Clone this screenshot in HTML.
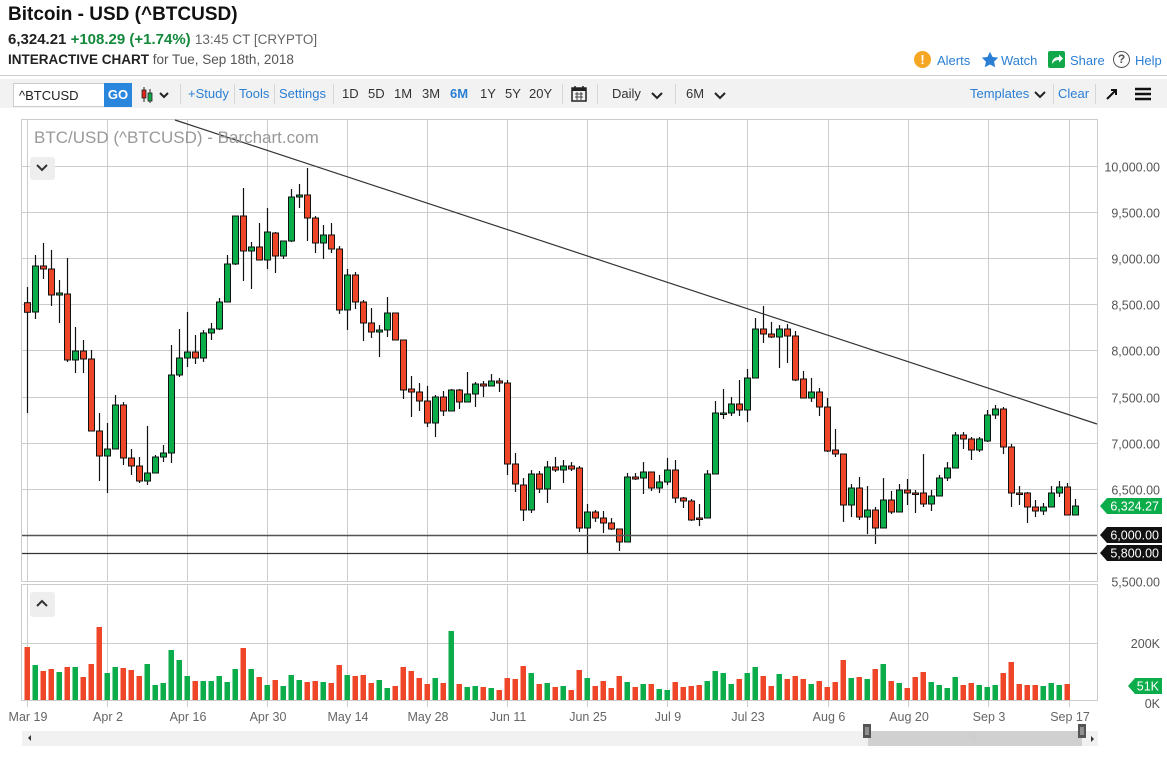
<!DOCTYPE html>
<html><head><meta charset="utf-8"><style>
*{margin:0;padding:0;box-sizing:border-box}
body{width:1167px;height:757px;background:#fff;font-family:"Liberation Sans",sans-serif;position:relative;overflow:hidden;color:#222}
.a{position:absolute;white-space:nowrap}
.tb{position:absolute;top:79px;left:0;width:1167px;height:29px;background:#f2f2f2}
.bl{color:#2a7fd4}
.sep{position:absolute;top:84px;width:1px;height:20px;background:#d6d6d6}
</style></head><body>
<div class="a" style="left:8px;top:4px;font-size:19px;font-weight:bold;color:#111">Bitcoin - USD (^BTCUSD)</div>
<div class="a" style="left:8px;top:31px;font-size:15px"><b>6,324.21</b> <b style="color:#14893c">+108.29 (+1.74%)</b> <span style="color:#666;font-size:13.5px">13:45 CT [CRYPTO]</span></div>
<div class="a" style="left:8px;top:52px;font-size:13.5px"><b style="color:#222">INTERACTIVE CHART</b> <span style="color:#555">for Tue, Sep 18th, 2018</span></div>
<div class="a" style="left:0;top:75px;width:1167px;height:1px;background:#ccc"></div>
<div class="a" style="left:914px;top:51px;width:17px;height:17px;border-radius:50%;background:#f5a623;color:#fff;font-weight:bold;font-size:13px;text-align:center;line-height:17px">!</div>
<div class="a bl" style="left:937px;top:53px;font-size:13px">Alerts</div>
<svg class="a" style="left:981px;top:51px" width="18" height="18" viewBox="0 0 24 24"><path d="M12 1l3.4 7 7.6.9-5.6 5.2 1.5 7.6L12 18l-6.9 3.7 1.5-7.6L1 8.9 8.6 8z" fill="#2a7fd4"/></svg>
<div class="a bl" style="left:1001px;top:53px;font-size:13px">Watch</div>
<svg class="a" style="left:1048px;top:51px" width="17" height="17" viewBox="0 0 17 17"><rect width="17" height="17" rx="2" fill="#12a84a"/><path d="M4 13c0-5 3-7 7-7V3.5L15 7.5 11 11.5V9c-3 0-5 1-7 4z" fill="#fff"/></svg>
<div class="a bl" style="left:1070px;top:53px;font-size:13px">Share</div>
<div class="a" style="left:1113px;top:51px;width:17px;height:17px;border-radius:50%;border:1.5px solid #555;color:#555;font-size:12px;text-align:center;line-height:14px;font-weight:bold">?</div>
<div class="a bl" style="left:1135px;top:53px;font-size:13px">Help</div>

<div class="tb"></div>
<div class="a" style="left:13px;top:83px;width:92px;height:24px;background:#fff;border:1px solid #ccc;font-size:13px;padding:4px 0 0 5px">^BTCUSD</div>
<div class="a" style="left:104px;top:83px;width:28px;height:24px;background:#2a86dc;color:#fff;font-weight:bold;font-size:13px;text-align:center;line-height:24px">GO</div>
<svg class="a" style="left:140px;top:86px" width="32" height="18"><line x1="4" y1="1" x2="4" y2="16" stroke="#222"/><rect x="2" y="4" width="4" height="8" fill="#e0251b" stroke="#222" stroke-width=".8"/><line x1="10" y1="3" x2="10" y2="17" stroke="#222"/><rect x="8" y="7" width="4" height="8" fill="#12a84a" stroke="#222" stroke-width=".8"/><path d="M20 7l4 4 4-4" fill="none" stroke="#222" stroke-width="2"/></svg>
<div class="sep" style="left:180px"></div>
<div class="a bl" style="left:188px;top:86px;font-size:13px">+Study</div>
<div class="sep" style="left:234px"></div>
<div class="a bl" style="left:239px;top:86px;font-size:13px">Tools</div>
<div class="sep" style="left:274px"></div>
<div class="a bl" style="left:279px;top:86px;font-size:13px">Settings</div>
<div class="sep" style="left:333px"></div>
<div class="a" style="left:342px;top:86px;font-size:13px;color:#333">1D</div>
<div class="a" style="left:368px;top:86px;font-size:13px;color:#333">5D</div>
<div class="a" style="left:394px;top:86px;font-size:13px;color:#333">1M</div>
<div class="a" style="left:422px;top:86px;font-size:13px;color:#333">3M</div>
<div class="a" style="left:450px;top:86px;font-size:13px;color:#2a7fd4;font-weight:bold">6M</div>
<div class="a" style="left:480px;top:86px;font-size:13px;color:#333">1Y</div>
<div class="a" style="left:505px;top:86px;font-size:13px;color:#333">5Y</div>
<div class="a" style="left:529px;top:86px;font-size:13px;color:#333">20Y</div>
<div class="sep" style="left:562px"></div>
<svg class="a" style="left:571px;top:85px" width="16" height="17"><rect x="1" y="3" width="14" height="13" fill="none" stroke="#222" stroke-width="1.5"/><rect x="1" y="3" width="14" height="3" fill="#222"/><line x1="4" y1="1" x2="4" y2="5" stroke="#222" stroke-width="1.5"/><line x1="12" y1="1" x2="12" y2="5" stroke="#222" stroke-width="1.5"/><path d="M4 9h8M4 12h8M6 7v8M10 7v8" stroke="#222" stroke-width=".8"/></svg>
<div class="sep" style="left:597px"></div>
<div class="a" style="left:612px;top:86px;font-size:13px;color:#333">Daily</div>
<svg class="a" style="left:651px;top:91px" width="12" height="9"><path d="M1 2l5 5 5-5" fill="none" stroke="#222" stroke-width="2"/></svg>
<div class="sep" style="left:675px"></div>
<div class="a" style="left:686px;top:86px;font-size:13px;color:#333">6M</div>
<svg class="a" style="left:714px;top:91px" width="12" height="9"><path d="M1 2l5 5 5-5" fill="none" stroke="#222" stroke-width="2"/></svg>
<div class="a bl" style="left:970px;top:86px;font-size:13px">Templates</div>
<svg class="a" style="left:1034px;top:90px" width="12" height="9"><path d="M1 2l5 5 5-5" fill="none" stroke="#222" stroke-width="2"/></svg>
<div class="sep" style="left:1053px"></div>
<div class="a bl" style="left:1058px;top:86px;font-size:13px">Clear</div>
<div class="sep" style="left:1095px"></div>
<svg class="a" style="left:1105px;top:87px" width="14" height="14"><path d="M2 12L11 3M6 3h5v5" fill="none" stroke="#111" stroke-width="2"/></svg>
<svg class="a" style="left:1135px;top:87px" width="16" height="14"><path d="M0 2h16M0 7h16M0 12h16" stroke="#111" stroke-width="2.4"/></svg>

<svg id="ch" class="a" style="left:0;top:0" width="1167" height="757"></svg>

<div class="a" style="left:34px;top:128px;font-size:17px;color:#999">BTC/USD (^BTCUSD) - Barchart.com</div>
<div class="a" style="left:30px;top:157px;width:25px;height:23px;background:#eee;border-radius:3px"></div>
<svg class="a" style="left:36px;top:163px" width="12" height="9"><path d="M1 2l5 5 5-5" fill="none" stroke="#333" stroke-width="2"/></svg>
<div class="a" style="left:30px;top:592px;width:25px;height:25px;background:#eee;border-radius:3px"></div>
<svg class="a" style="left:36px;top:599px" width="12" height="9"><path d="M1 7l5-5 5 5" fill="none" stroke="#333" stroke-width="2"/></svg>

<script>
var C=[[302.7,312.3,287,413,0],[266,312,255,319,1],[266,269,243,279,0],[269,295,250,306,0],[293,295,280,323,1],[294,360,258,362,0],[351,360,327,373,1],[351,359,340,373,0],[359,431,350,431,0],[431,456,413,481,0],[449,456,423,493,1],[405,449,395,449,1],[405,458,402,465,0],[458,466,449,475,0],[466,481,457,483,0],[473,481,426,485,1],[457,473,455,473,1],[453,457,445,462,1],[375,453,345,463,1],[358,375,329,377,1],[352,358,312,367,1],[352,358,335,364,0],[333,358,330,362,1],[329,333,323,340,1],[302,329,298,330,1],[264,302,255,302,1],[216,264,216,265,1],[216,251,188,281,0],[247,251,242,289,1],[247,260,223,260,0],[232,260,208,269,1],[233,256,232,273,0],[241,256,241,259,1],[197,241,189,242,1],[195,197,184,208,1],[195,218,168,241,0],[218,243,216,253,0],[235,243,225,259,1],[235,249,223,253,0],[249,310,246,314,0],[275,310,269,330,1],[275,302,272,309,0],[302,323,300,341,0],[323,332,308,338,0],[330,332,325,357,1],[313,330,297,337,1],[313,340,313,340,0],[340,390,340,399,0],[389,392,376,417,0],[392,401,383,411,0],[401,423,386,427,0],[397,423,395,437,1],[397,411,391,416,0],[390,411,389,411,1],[390,402,389,409,0],[394,402,372,402,1],[384,394,382,407,1],[384,386,381,397,0],[381,386,374,386,1],[381,383,378,392,0],[383,464,380,475,0],[464,484,453,492,0],[485,510,478,521,0],[474,510,470,513,1],[474,489,471,493,0],[467,489,461,503,1],[467,470,457,472,0],[466,470,460,483,1],[466,469,462,471,0],[468,528,466,532,0],[512,528,504,553,1],[512,518,510,522,0],[518,523,511,533,0],[523,529,518,530,0],[529,542,529,551,0],[477,542,473,542,1],[477,479,473,480,0],[472,478,462,494,1],[472,488,472,491,0],[482,488,475,493,1],[470,482,458,485,1],[470,498,460,503,0],[498,501,497,508,0],[501,520,499,521,0],[518,519,504,526,0],[474,518,470,518,1],[413,474,401,474,1],[413,414,389,419,1],[404,413,397,416,1],[404,410,380,416,0],[378,410,369,422,1],[329,378,318,378,1],[329,334,306,343,0],[334,337,322,338,0],[329,337,325,368,1],[329,336,324,363,0],[336,380,331,381,0],[379,398,371,398,0],[392,398,378,402,1],[392,407,388,416,0],[407,451,398,452,0],[450,454,429,457,0],[454,505,454,522,0],[488,505,484,517,1],[488,517,477,520,0],[510,517,486,534,1],[510,528,507,544,0],[500,528,478,528,1],[500,512,491,514,0],[490,512,484,512,1],[490,493,479,505,0],[493,494,490,513,0],[493,504,454,507,0],[496,504,490,511,1],[478,496,475,496,1],[468,478,462,481,1],[435,468,432,468,1],[435,439,432,449,0],[439,450,437,460,0],[439,450,437,452,1],[415,441,410,442,1],[409,415,405,419,1],[409,447,407,454,0],[447,493,444,507,0],[493,494,486,505,0],[493,507,492,523,0],[507,511,500,517,0],[507,511,503,515,1],[493,507,486,507,1],[487,493,481,497,1],[487,515,483,515,0],[506,515,499,515,1]];
var V=[647,665,671,669,672,667,667,677,664,627,673,667,668,670,676,664,685,683,650,660,676,681,681,681,676,682,669,648,669,677,685,680,686,675,680,682,681,682,683,665,675,676,675,683,680,688,686,667,671,678,684,678,683,631,684,687,686,687,688,690,678,679,666,673,684,683,687,686,690,670,678,686,681,688,676,682,687,684,684,689,690,682,687,686,685,681,671,673,684,679,673,667,676,686,674,679,676,679,684,681,687,682,660,678,677,679,669,664,681,683,688,677,672,682,685,688,677,685,683,685,687,685,673,662,684,685,685,686,683,685,684];
var G='#cccccc',s='';
var dx=[27,107,187,267,347,427,507,587,667,747,828,908,988,1069],dl=['Mar 19','Apr 2','Apr 16','Apr 30','May 14','May 28','Jun 11','Jun 25','Jul 9','Jul 23','Aug 6','Aug 20','Sep 3','Sep 17'];
s+='<rect x="21.5" y="119.5" width="1076" height="462" fill="none" stroke="'+G+'"/>';
s+='<rect x="21.5" y="584.5" width="1076" height="116" fill="none" stroke="'+G+'"/>';
for(var i=0;i<10;i++){var y=166+i*46.1;y=Math.round(y)+.5;s+='<line x1="22" x2="1097" y1="'+y+'" y2="'+y+'" stroke="'+G+'"/>';
var p=10000-500*i;var t=p.toLocaleString('en-US')+'.00';s+='<text x="1160" y="'+(y+5)+'" font-size="12.5" fill="#555" text-anchor="end">'+t+'</text>';}
s+='<line x1="22" x2="1097" y1="643.5" y2="643.5" stroke="'+G+'"/>';
dx.forEach(function(x,k){s+='<line x1="'+(x+.5)+'" x2="'+(x+.5)+'" y1="120" y2="581" stroke="'+G+'"/><line x1="'+(x+.5)+'" x2="'+(x+.5)+'" y1="585" y2="707" stroke="'+G+'"/>';
s+='<text x="'+(x+1)+'" y="721" font-size="12.5" fill="#666" text-anchor="middle">'+dl[k]+'</text>';});
V.forEach(function(v,i){var x=27+8*i;s+='<rect x="'+(x-2.5)+'" y="'+v+'" width="5.5" height="'+(700-v)+'" fill="'+(C[i][4]?'#0bad4b':'#ef4528')+'"/>';});
C.forEach(function(c,i){var x=27+8*i+.5;s+='<line x1="'+x+'" x2="'+x+'" y1="'+c[2]+'" y2="'+c[3]+'" stroke="#111" stroke-width="1.2"/>';
var h=Math.max(c[1]-c[0],1.5);s+='<rect x="'+(x-3)+'" y="'+c[0]+'" width="6" height="'+h+'" fill="'+(c[4]?'#0bad4b':'#ef4528')+'" stroke="#111" stroke-width="1"/>';});
s+='<line x1="22" x2="1097" y1="535.5" y2="535.5" stroke="#555" stroke-width="1.5"/><line x1="22" x2="1097" y1="553.5" y2="553.5" stroke="#333" stroke-width="1.2"/>';
s+='<line x1="175" y1="120" x2="1097" y2="424" stroke="#333" stroke-width="1.2"/>';
function box(y,t,col,x0){x0=x0||1100;s+='<path d="M'+x0+' '+y+'l7 -8h'+(1162-x0-7)+'v16h-'+(1162-x0-7)+'z" fill="'+col+'"/><text x="1159" y="'+(y+4.5)+'" font-size="12.5" fill="#fff" text-anchor="end">'+t+'</text>';}
box(506,'6,324.27','#0bad4b');box(535,'6,000.00','#111');box(553,'5,800.00','#111');
s+='<text x="1160" y="648" font-size="12.5" fill="#555" text-anchor="end">200K</text>';
box(686,'51K','#0bad4b',1128);
s+='<text x="1160" y="708" font-size="12.5" fill="#555" text-anchor="end">0K</text>';
s+='<rect x="22" y="731" width="1076" height="15" fill="#f1f1f1"/><path d="M31 735v6l-3-3z" fill="#333"/><path d="M1091 736v6l3-3z" fill="#333"/>';
s+='<rect x="868" y="731" width="214" height="15" fill="#d0d0d0"/><rect x="863" y="724" width="8" height="14" fill="#555"/><rect x="1078" y="724" width="8" height="14" fill="#555"/>';
s+='<path d="M866 727v8M868 727v8M1081 727v8M1083 727v8M971 735v5M973 735v5M975 735v5" stroke="#ccc" stroke-width="1"/>';
document.getElementById('ch').innerHTML=s;
</script>
</body></html>
